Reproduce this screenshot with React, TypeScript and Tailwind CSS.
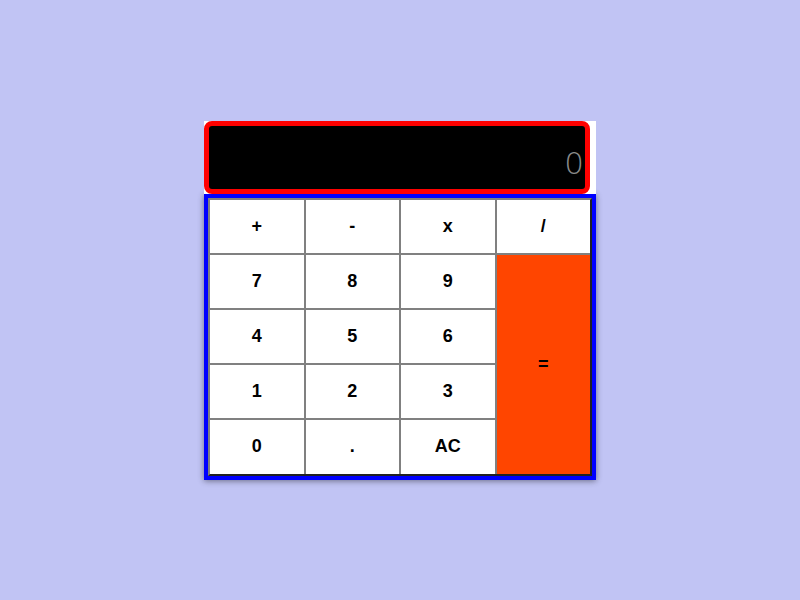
const keys = [
  { label: '+' },
  { label: '-' },
  { label: 'x' },
  { label: '/' },
  { label: '7' },
  { label: '8' },
  { label: '9' },
  { label: '=', tall: true },
  { label: '4' },
  { label: '5' },
  { label: '6' },
  { label: '1' },
  { label: '2' },
  { label: '3' },
  { label: '0' },
  { label: '.' },
  { label: 'AC' },
];

export default function App() {
  return (
    <div className="w-[800px] h-[600px] bg-[#c1c4f4] flex items-center justify-center font-['Liberation_Sans',Arial,sans-serif]">
      <div className="w-[392px] flex flex-col bg-white">
        <div className="h-[73px] relative z-10 bg-white">
          <div className="w-[386px] h-[73px] rounded-lg border-[5px] border-[#ff0000] bg-black flex items-end justify-end pr-[1px] pb-[10px]">
            <span className="text-[31px] leading-none text-[#8a8a8a] font-['DejaVu_Sans',sans-serif] font-light font-stretch-condensed">
              0
            </span>
          </div>
        </div>
        <div className="border-4 border-[#0000ff] shadow-[0_1px_6px_rgba(0,0,0,0.45)]">
          <div className="border-2 border-t-[#808080] border-l-[#808080] border-r-[#222] border-b-[#222]">
            <div className="grid grid-cols-4 grid-rows-5 gap-[2px] bg-[#808080] h-[274px]">
              {keys.map((k) =>
                k.tall ? (
                  <button
                    key={k.label}
                    className="row-span-4 bg-[#ff4500] text-black font-bold text-[18px] flex items-center justify-center"
                  >
                    {k.label}
                  </button>
                ) : (
                  <button
                    key={k.label}
                    className="bg-white text-black font-bold text-[18px] flex items-center justify-center"
                  >
                    {k.label}
                  </button>
                )
              )}
            </div>
          </div>
        </div>
      </div>
    </div>
  );
}
